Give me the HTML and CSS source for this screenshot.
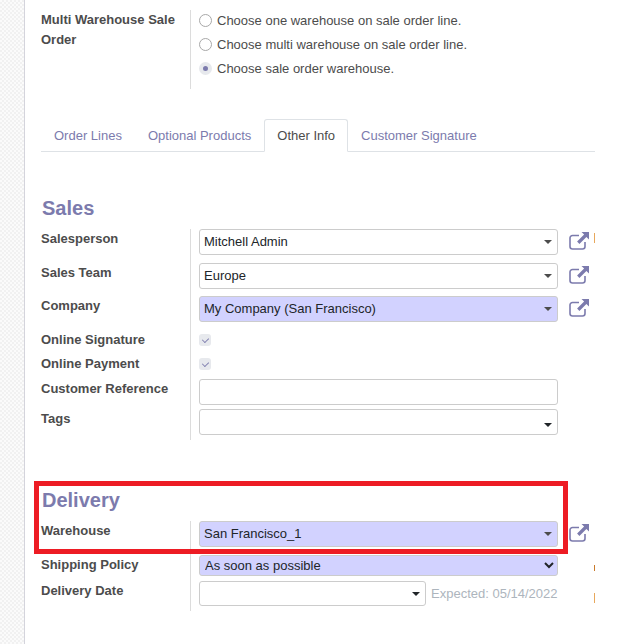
FILE: index.html
```html
<!DOCTYPE html>
<html lang="en">
<head>
    <meta charset="UTF-8">
    <meta name="viewport" content="width=device-width, initial-scale=1.0">
    <title>Sale Order</title>
    <link rel="stylesheet" href="styles.css">
</head>
<body>
    <svg class="icon-defs" width="0" height="0">
        <symbol id="external" viewBox="0 0 20 18">
            <path d="M16 10v4.500a2.500 2.500 0 0 1-2.500 2.500H3.500A2.500 2.500 0 0 1 1 14.500V6a2.500 2.500 0 0 1 2.500-2.500H10" fill="none" stroke="currentColor" stroke-width="1.600"/>
            <path d="M12.500 0H20v7.500l-2.600-2.600-7 7-2.300-2.300 7-7z" fill="currentColor"/>
        </symbol>
    </svg>

    <div class="side"></div>
    <main class="sheet">
        <section class="group top-group">
            <div class="row row-radios">
                <div class="row-label">Multi Warehouse Sale Order</div>
                <div class="row-value radios">
                    <div class="radio-line"><span class="radio"></span>Choose one warehouse on sale order line.</div>
                    <div class="radio-line"><span class="radio"></span>Choose multi warehouse on sale order line.</div>
                    <div class="radio-line"><span class="radio checked"></span>Choose sale order warehouse.</div>
                </div>
            </div>
        </section>

        <ul class="tabs">
            <li class="tab">Order Lines</li>
            <li class="tab">Optional Products</li>
            <li class="tab active">Other Info</li>
            <li class="tab">Customer Signature</li>
        </ul>

        <h2 class="group-title sales-title">Sales</h2>
        <section class="group">
            <div class="row h34">
                <div class="row-label">Salesperson</div>
                <div class="row-value">
                    <div class="field">Mitchell Admin<span class="caret"></span></div>
                    <svg class="ext"><use href="#external"/></svg>
                </div>
            </div>
            <div class="row h33">
                <div class="row-label">Sales Team</div>
                <div class="row-value">
                    <div class="field">Europe<span class="caret"></span></div>
                    <svg class="ext"><use href="#external"/></svg>
                </div>
            </div>
            <div class="row h33">
                <div class="row-label">Company</div>
                <div class="row-value">
                    <div class="field required">My Company (San Francisco)<span class="caret"></span></div>
                    <svg class="ext"><use href="#external"/></svg>
                </div>
            </div>
            <div class="row h24 row-check">
                <div class="row-label">Online Signature</div>
                <div class="row-value"><span class="check"></span></div>
            </div>
            <div class="row h24 row-check">
                <div class="row-label">Online Payment</div>
                <div class="row-value"><span class="check"></span></div>
            </div>
            <div class="row h30 row-low">
                <div class="row-label">Customer Reference</div>
                <div class="row-value"><div class="field"></div></div>
            </div>
            <div class="row h33 row-low">
                <div class="row-label">Tags</div>
                <div class="row-value"><div class="field"><span class="caret dark low"></span></div></div>
            </div>
        </section>

        <h2 class="group-title delivery-title">Delivery</h2>
        <section class="group">
            <div class="row h34">
                <div class="row-label">Warehouse</div>
                <div class="row-value">
                    <div class="field required">San Francisco_1<span class="caret"></span></div>
                    <svg class="ext"><use href="#external"/></svg>
                </div>
            </div>
            <div class="row h26">
                <div class="row-label">Shipping Policy</div>
                <div class="row-value">
                    <select class="native-select">
                        <option>As soon as possible</option>
                    </select>
                </div>
            </div>
            <div class="row h30">
                <div class="row-label">Delivery Date</div>
                <div class="row-value">
                    <div class="field date"><span class="caret dark"></span></div>
                    <span class="expected">Expected: 05/14/2022</span>
                </div>
            </div>
        </section>
    </main>

    <!-- annotation on the screenshot -->
    <div class="red-box"></div>
    <span class="speck speck-1"></span>
    <span class="speck speck-2"></span>
    <span class="speck speck-3"></span>
</body>
</html>
```

FILE: styles.css
```css
* {
    box-sizing: border-box;
}

html, body {
    height: 100%;
}

body {
    margin: 0;
    display: flex;
    height: 644px;
    overflow: hidden;
    background-color: #fff;
    color: #212529;
    font-family: "Liberation Sans", Arial, sans-serif;
    font-size: 13px;
}

.icon-defs {
    position: absolute;
}

.side {
    width: 25px;
    flex: none;
    border-right: 1px solid #d4d4dc;
    background-color: #f7f7f7;
    background-image: repeating-conic-gradient(#f1f1f1 0 25%, #fbfbfb 0 50%);
    background-size: 4px 4px;
}

.sheet {
    width: 570px;
    padding: 10px 0 0 16px;
}

.group {
    width: 554px;
}

.row {
    display: flex;
}

.row-label {
    width: 149px;
    flex: none;
    color: #4c4c4c;
    font-size: 13px;
    font-weight: bold;
    line-height: 20px;
}

.row-value {
    flex: 1;
    display: flex;
    align-items: flex-start;
    gap: 11px;
    padding-left: 8px;
    border-left: 1px solid #dcdcdc;
}

.h24 { height: 24px; }
.h26 { height: 26px; }
.h30 { height: 30px; }
.h33 { height: 33px; }
.h34 { height: 34px; }

.row-radios {
    height: 79px;
}

.radios {
    display: block;
}

.radio-line {
    display: flex;
    align-items: center;
    height: 20px;
    margin-bottom: 4px;
    gap: 5px;
    color: #4c4c4c;
    font-size: 13px;
}

.radio {
    width: 13px;
    height: 13px;
    border: 1px solid #a8a8a8;
    border-radius: 50%;
}

.radio.checked {
    border: 4px solid #e7e9ed;
    background-color: #7c7bad;
}

.tabs {
    display: flex;
    width: 554px;
    height: 33px;
    margin: 30px 0 0;
    padding: 0;
    list-style: none;
    border-bottom: 1px solid #dee2e6;
}

.tab {
    height: 33px;
    padding: 9px 13px 0;
    color: #7c7bad;
    font-size: 13px;
    line-height: 16px;
}

.tab.active {
    background-color: #fff;
    color: #4c4c4c;
    border: 1px solid #dee2e6;
    border-bottom-color: #fff;
    border-radius: 3px 3px 0 0;
    padding: 8px 12px 0;
}

.group-title {
    margin: 0;
    padding-left: 1px;
    color: #7c7bad;
    font-size: 20px;
    font-weight: bold;
    line-height: 24px;
}

.sales-title {
    margin-top: 44px;
    margin-bottom: 9px;
}

.delivery-title {
    margin-top: 48px;
    margin-bottom: 9px;
}

.field {
    position: relative;
    width: 359px;
    height: 26px;
    flex: none;
    padding-left: 4px;
    border: 1px solid #ccc;
    border-radius: 3px;
    background-color: #fff;
    color: #212529;
    font-size: 13px;
    line-height: 24px;
}

.field.required {
    background-color: #d2d2ff;
}

.field.date {
    width: 227px;
    height: 25px;
}

.caret {
    position: absolute;
    top: 10px;
    right: 5px;
    width: 0;
    height: 0;
    border-top: 4px solid #4c4c4c;
    border-left: 4px solid transparent;
    border-right: 4px solid transparent;
}

.caret.dark {
    border-top-color: #212529;
}

.caret.low {
    top: 13px;
}

.ext {
    width: 20px;
    height: 18px;
    margin-top: 3px;
    flex: none;
    color: #7c7bad;
}

.check {
    position: relative;
    width: 12px;
    height: 12px;
    margin-top: 5px;
    border-radius: 3px;
    background-color: #e7e9ed;
}

.check::after {
    content: "";
    position: absolute;
    left: 3px;
    top: 3px;
    width: 6px;
    height: 4px;
    border-left: 1.500px solid #7c7bad;
    border-bottom: 1.500px solid #7c7bad;
    transform: rotate(-45deg) scale(0.85);
}

.row-check .row-label {
    padding-top: 1px;
}

.row-low .row-label,
.row-low .row-value {
    padding-top: 2px;
}

.native-select {
    width: 359px;
    height: 21px;
    padding: 0 0 0 1px;
    border: 1px solid #ccc;
    border-radius: 3px;
    background-color: #d2d2ff;
    color: #212529;
    font-family: inherit;
    font-size: 13px;
}

.expected {
    margin-left: -6px;
    color: #adb5bd;
    font-size: 13px;
    line-height: 25px;
    white-space: nowrap;
}

.red-box {
    position: absolute;
    left: 34px;
    top: 481px;
    width: 534px;
    height: 73px;
    border: 5px solid #ed1c24;
}

.speck {
    position: absolute;
    left: 594px;
    width: 1px;
    background-color: #e8a85c;
}

.speck-1 { top: 233px; height: 10px; }
.speck-2 { top: 565px; height: 6px; background-color: #c97a2b; }
.speck-3 { top: 593px; height: 10px; }
```
